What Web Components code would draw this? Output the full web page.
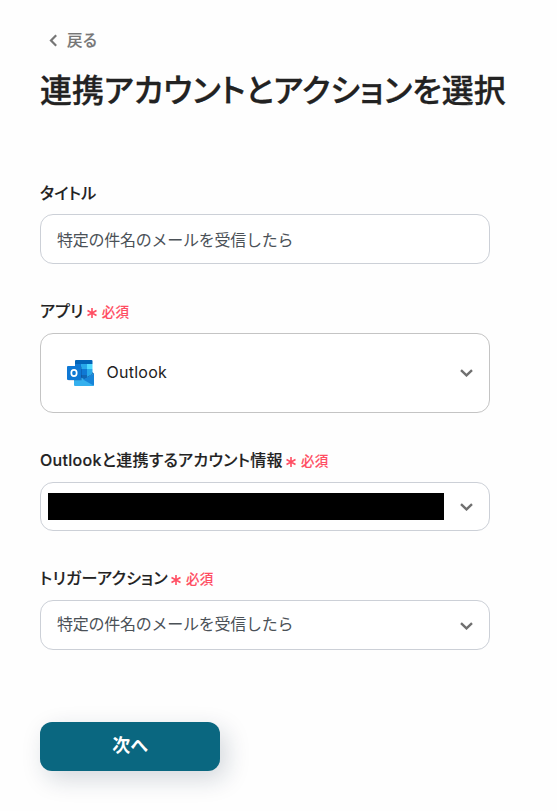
<!DOCTYPE html>
<html lang="ja">
<head>
<meta charset="utf-8">
<title>連携アカウントとアクションを選択</title>
<style>
    body {
        background: #fefefe;
        color: #222;
        font-family: Inter, "Noto Sans CJK JP", sans-serif;
        font-feature-settings: "palt";
        font-size: 16px;
        margin: 0;
    }

    .app-name {
        letter-spacing: .25px;
        padding-bottom: 2px;
    }
</style>
</head>
<body>
<setup-page>
    <back-link slot="back">戻る</back-link>
    <span slot="title">連携アカウントとアクションを選択</span>

    <form-field data-label="タイトル" style="--label-pad: 0px">
        <field-box style="--text-top: 2px">特定の件名のメールを受信したら</field-box>
    </form-field>

    <form-field data-label="アプリ" data-required="true">
        <field-box data-select="true" style="--height: 80px; --border: #c4c4c4; --pad: 26px; --color: #222; --shift: -1px">
            <outlook-icon></outlook-icon><span class="app-name">Outlook</span>
        </field-box>
    </form-field>

    <form-field data-label="Outlookと連携するアカウント情報" data-required="true">
        <field-box data-select="true" style="--height: 49px; --pad: 7px"><masked-value></masked-value></field-box>
    </form-field>

    <form-field data-label="トリガーアクション" data-required="true" style="--gap: 72px">
        <field-box data-select="true" style="--shift: 2px; --text-bottom: 2px">特定の件名のメールを受信したら</field-box>
    </form-field>

    <primary-button>次へ</primary-button>
</setup-page>

<script>
//Helper - attach a shadow root with the given markup.
function render(element, html){
    const template = document.createElement('template');
    template.innerHTML = html;
    element.attachShadow({mode: 'open'});
    element.shadowRoot.appendChild(template.content.cloneNode(true));
}

class SetupPage extends HTMLElement{
    constructor(){
        super();
        render(this, `
            <style>
                :host {
                    box-sizing: border-box;
                    display: block;
                    height: 811px;
                    padding: 30px 40px 0;
                }

                h1 {
                    -webkit-text-stroke: .3px currentColor;
                    font-size: 32px;
                    font-weight: 500;
                    line-height: 48px;
                    margin: 17px 0 66px;
                    white-space: nowrap;
                }
            </style>
            <slot name="back"></slot>
            <h1><slot name="title"></slot></h1>
            <slot></slot>
        `);
    }
}

class BackLink extends HTMLElement{
    constructor(){
        super();
        render(this, `
            <style>
                :host {
                    align-items: center;
                    color: #767676;
                    display: flex;
                    font-size: 15.5px;
                    font-weight: 500;
                    gap: 8px;
                    height: 20px;
                    letter-spacing: .6px;
                    line-height: 20px;
                    padding-left: 9px;
                }

                svg {
                    display: block;
                }

                .text {
                    -webkit-text-stroke: .2px currentColor;
                    padding-top: 2px;
                }
            </style>
            <svg width="10" height="14" viewBox="0 0 10 14" fill="none" stroke="#767676" stroke-width="2.2"><path d="M7.2 2.3 2 7.5l5.2 5.2"/></svg>
            <span class="text"><slot></slot></span>
        `);
    }
}

class FormField extends HTMLElement{
    constructor(){
        super();
        render(this, `
            <style>
                :host {
                    display: block;
                    margin-bottom: var(--gap, 36px);
                    width: 450px;
                }

                .label {
                    align-items: center;
                    box-sizing: border-box;
                    display: flex;
                    font-size: 16px;
                    font-weight: 500;
                    height: 24px;
                    letter-spacing: .3px;
                    line-height: 22px;
                    margin-bottom: 9px;
                    padding-bottom: var(--label-pad, 2px);
                }

                .text {
                    -webkit-text-stroke: .15px currentColor;
                }

                .required {
                    -webkit-text-stroke: .1px currentColor;
                    align-items: center;
                    color: #ff4d62;
                    display: flex;
                    font-size: 13.5px;
                    gap: 4px;
                    margin-left: 3px;
                    padding-top: 1px;
                }

                .required svg {
                    margin-top: 2px;
                }
            </style>
            <div class="label">
                <span class="text"></span>
            </div>
            <slot></slot>
        `);
        this.shadowRoot.querySelector('.text').textContent = this.getAttribute('data-label');
        if (this.getAttribute('data-required')) {
            this.addRequired();
        }
    }

    //Method - Add the required marker after the label.
    addRequired(){
        let required = document.createElement('span');
        required.className = 'required';
        required.innerHTML = `
            <svg width="11" height="12" viewBox="0 0 11 12" fill="none" stroke="#ff4d62" stroke-width="1.6"><path d="M5 1v10M.5 3.5l9 5M9.500 3.5l-9 5"/></svg>
            <span>必須</span>
        `;
        this.shadowRoot.querySelector('.label').appendChild(required);
    }
}

class FieldBox extends HTMLElement{
    constructor(){
        super();
        render(this, `
            <style>
                :host {
                    align-items: center;
                    background: #fff;
                    border: 1px solid var(--border, #ccd0d7);
                    border-radius: 13px;
                    box-sizing: border-box;
                    color: var(--color, #4b5157);
                    display: flex;
                    font-feature-settings: normal;
                    height: var(--height, 50px);
                    justify-content: space-between;
                    padding: 0 16px 0 var(--pad, 16px);
                }

                .value {
                    align-items: center;
                    display: flex;
                    letter-spacing: -.25px;
                    line-height: 24px;
                    padding-bottom: var(--text-bottom, 0);
                    padding-top: var(--text-top, 0);
                }

                svg {
                    margin-top: var(--shift, 0);
                }
            </style>
            <div class="value"><slot></slot></div>
        `);
        if (this.getAttribute('data-select')) {
            this.shadowRoot.querySelector('.value').insertAdjacentHTML('afterend', `
                <svg width="13" height="8" viewBox="0 0 13 8" fill="none" stroke="#707070" stroke-width="2.4"><path d="M1 1.2l5.5 5.2L12 1.2"/></svg>
            `);
        }
    }
}

//Blacked out value of the connected account.
class MaskedValue extends HTMLElement{
    constructor(){
        super();
        render(this, `
            <style>
                :host {
                    background: #000;
                    display: block;
                    height: 27px;
                    width: 396px;
                }
            </style>
        `);
    }
}

class OutlookIcon extends HTMLElement{
    constructor(){
        super();
        render(this, `
            <style>
                :host {
                    display: block;
                    height: 26px;
                    margin-right: 12.5px;
                    width: 27px;
                }

                svg {
                    display: block;
                }
            </style>
            <svg width="27" height="26" viewBox="0 0 27 26">
                <path fill="#14549a" d="M8 12h17l2 1.5-10 6.5-9-5z"/>
                <path fill="#0364b8" d="M8 1q0-1 1-1h15.5q1 0 1 1v3H8z"/>
                <path fill="#0f78d4" d="M8 4h6v5H8z"/>
                <path fill="#28a8ea" d="M14 4h6v5h-6z"/>
                <path fill="#50d9ff" d="M20 4h5.5v5H20z"/>
                <path fill="#0364b8" d="M8 9h6v6H8z"/>
                <path fill="#0f78d4" d="M14 9h6v7h-6z"/>
                <path fill="#28a8ea" d="M20 9h5.5v5L20 17z"/>
                <path fill="#1066b5" d="M8 15h12v2l-3 2-9-1z"/>
                <path fill="#35b0ee" d="M7 14l10 5 10 6q0 1-1 1H8q-1 0-1-1z"/>
                <path fill="#1784d8" d="M27 13.5v11q0 1-.5 1L16 19.5z"/>
                <rect x="1" y="6.5" width="14" height="14" rx="1" fill="#0a2767" opacity=".25"/>
                <rect y="6" width="14" height="14" rx="1" fill="#0f78d4"/>
                <ellipse cx="7" cy="13" rx="2.7" ry="3.2" fill="none" stroke="#fff" stroke-width="1.7"/>
            </svg>
        `);
    }
}

class PrimaryButton extends HTMLElement{
    constructor(){
        super();
        render(this, `
            <style>
                :host {
                    display: block;
                }

                button {
                    background: #0a6780;
                    border: 0;
                    border-radius: 12px;
                    box-shadow: 6px 8px 24px rgba(19, 40, 64, .18);
                    color: #fff;
                    display: block;
                    font: inherit;
                    font-feature-settings: inherit;
                    font-size: 18px;
                    font-weight: 700;
                    height: 49px;
                    line-height: 24px;
                    padding: 0 0 2px;
                    width: 180px;
                }
            </style>
            <button><slot></slot></button>
        `);
    }
}

window.customElements.define('setup-page', SetupPage);
window.customElements.define('back-link', BackLink);
window.customElements.define('form-field', FormField);
window.customElements.define('field-box', FieldBox);
window.customElements.define('masked-value', MaskedValue);
window.customElements.define('outlook-icon', OutlookIcon);
window.customElements.define('primary-button', PrimaryButton);
</script>
</body>
</html>
